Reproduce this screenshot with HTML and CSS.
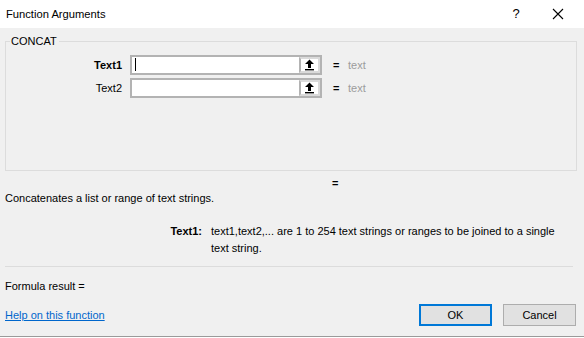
FILE: index.html
```html
<!DOCTYPE html>
<html lang="en">

<head>
    <meta charset="UTF-8">
    <meta name="viewport" content="width=device-width, initial-scale=1.0">
    <title>Function Arguments</title>
    <link rel="stylesheet" href="styles.css">
</head>

<body>
    <div class="titlebar">
        <span class="title">Function Arguments</span>
        <span class="help">?</span>
        <span class="close">
            <svg width="12" height="12" viewBox="0 0 12 12">
                <path d="M1 1 L11 11 M11 1 L1 11" stroke="#000" stroke-width="1.1" fill="none" />
            </svg>
        </span>
    </div>

    <div class="dialog">
        <fieldset class="args">
            <legend>CONCAT</legend>
            <div class="arg-row">
                <label class="arg-name bold">Text1</label>
                <div class="arg-input">
                    <span class="field"><span class="caret"></span></span>
                    <span class="collapse">
                        <svg width="11" height="12" viewBox="0 0 11 12">
                            <path d="M5.5 0.5 L10 5 L7 5 L7 9 L4 9 L4 5 L1 5 Z" fill="#000" />
                            <rect x="1" y="10" width="9" height="1.4" fill="#000" />
                        </svg>
                    </span>
                </div>
                <span class="eq">=</span>
                <span class="val">text</span>
            </div>
            <div class="arg-row">
                <label class="arg-name">Text2</label>
                <div class="arg-input">
                    <span class="field"></span>
                    <span class="collapse">
                        <svg width="11" height="12" viewBox="0 0 11 12">
                            <path d="M5.5 0.5 L10 5 L7 5 L7 9 L4 9 L4 5 L1 5 Z" fill="#000" />
                            <rect x="1" y="10" width="9" height="1.4" fill="#000" />
                        </svg>
                    </span>
                </div>
                <span class="eq">=</span>
                <span class="val">text</span>
            </div>
        </fieldset>

        <div class="result-eq">=</div>
        <p class="desc">Concatenates a list or range of text strings.</p>
        <div class="arg-help">
            <b>Text1:</b>
            <span>text1,text2,... are 1 to 254 text strings or ranges to be joined to a single text string.</span>
        </div>

        <div class="sep"></div>
        <div class="formula">Formula result =</div>

        <div class="footer">
            <a href="javascript:;" class="help-link">Help on this function</a>
            <div class="buttons">
                <button class="btn btn-ok">OK</button>
                <button class="btn">Cancel</button>
            </div>
        </div>
    </div>
    <div class="sheet-edge"></div>
</body>

</html>
```

FILE: styles.css
```css
* {
    margin: 0;
    padding: 0;
    box-sizing: border-box;
}

body {
    width: 584px;
    height: 338px;
    overflow: hidden;
    background-color: #f0f0f0;
    font-family: "Liberation Sans", Arial, sans-serif;
    font-size: 11px;
    line-height: 14px;
    color: #000;
}

.titlebar {
    height: 28px;
    background-color: #fff;
    display: flex;
    align-items: center;
    padding-left: 6px;
}

.titlebar .title {
    flex: 1;
    font-size: 11.2px;
}

.titlebar .help {
    width: 20px;
    text-align: center;
    font-size: 13px;
    margin-right: 22px;
}

.titlebar .close {
    width: 20px;
    display: flex;
    justify-content: center;
    margin-right: 16px;
}

.dialog {
    padding: 0 7px 0 5px;
}

/* group box */
.args {
    border: 1px solid #dcdcdc;
    height: 137px;
    margin-top: 6px;
    padding: 5px 0 0 0;
}

.args legend {
    margin-left: 4px;
    padding: 0 2px 0 1px;
    line-height: 14px;
}

.arg-row {
    display: flex;
    align-items: center;
    height: 23px;
}

.arg-name {
    width: 124px;
    text-align: right;
    padding-right: 8px;
}

.bold {
    font-weight: bold;
}

.arg-input {
    display: flex;
    width: 192px;
    height: 20px;
    border: 2px solid #b3b3b3;
    background-color: #fff;
}

.arg-input .field {
    flex: 1;
    display: flex;
    align-items: center;
    padding-left: 3px;
}

.caret {
    width: 1px;
    height: 13px;
    background-color: #000;
}

.arg-input .collapse {
    width: 21px;
    border-left: 2px solid #b3b3b3;
    background-color: #fff;
    border-top: 2px solid #dadada;
    border-right: 2px solid #dadada;
    border-bottom: 2px solid #dadada;
    display: flex;
    align-items: center;
    justify-content: center;
}

.eq {
    margin-left: 11px;
    width: 15px;
    font-weight: bold;
}

.val {
    color: #9c9c9c;
}

.result-eq {
    margin-top: 5px;
    padding-left: 327px;
    font-weight: bold;
}

.desc {
    margin-top: 1px;
}

.arg-help {
    display: flex;
    margin-top: 18px;
    line-height: 17px;
    height: 34px;
}

.arg-help b {
    width: 206px;
    text-align: right;
    padding-right: 9px;
    flex-shrink: 0;
}

.arg-help span {
    max-width: 352px;
}

.sep {
    border-top: 1px solid #dcdcdc;
    margin-top: 9px;
    margin-right: 4px;
}

.formula {
    margin-top: 12px;
}

.footer {
    display: flex;
    align-items: center;
    margin-top: 11px;
}

.help-link {
    flex: 1;
    color: #0066cc;
}

.buttons {
    display: flex;
    gap: 11px;
    margin-right: 1px;
}

.btn {
    width: 73px;
    height: 22px;
    border: 1px solid #adadad;
    background-color: #e1e1e1;
    font-family: "Liberation Sans", Arial, sans-serif;
    font-size: 11px;
    color: #000;
}

.btn-ok {
    border: 2px solid #0078d7;
}

.sheet-edge {
    position: fixed;
    left: 0;
    bottom: 0;
    width: 584px;
    height: 2px;
    border-top: 1px solid #9a9a9a;
    background-color: #fff;
}
```
